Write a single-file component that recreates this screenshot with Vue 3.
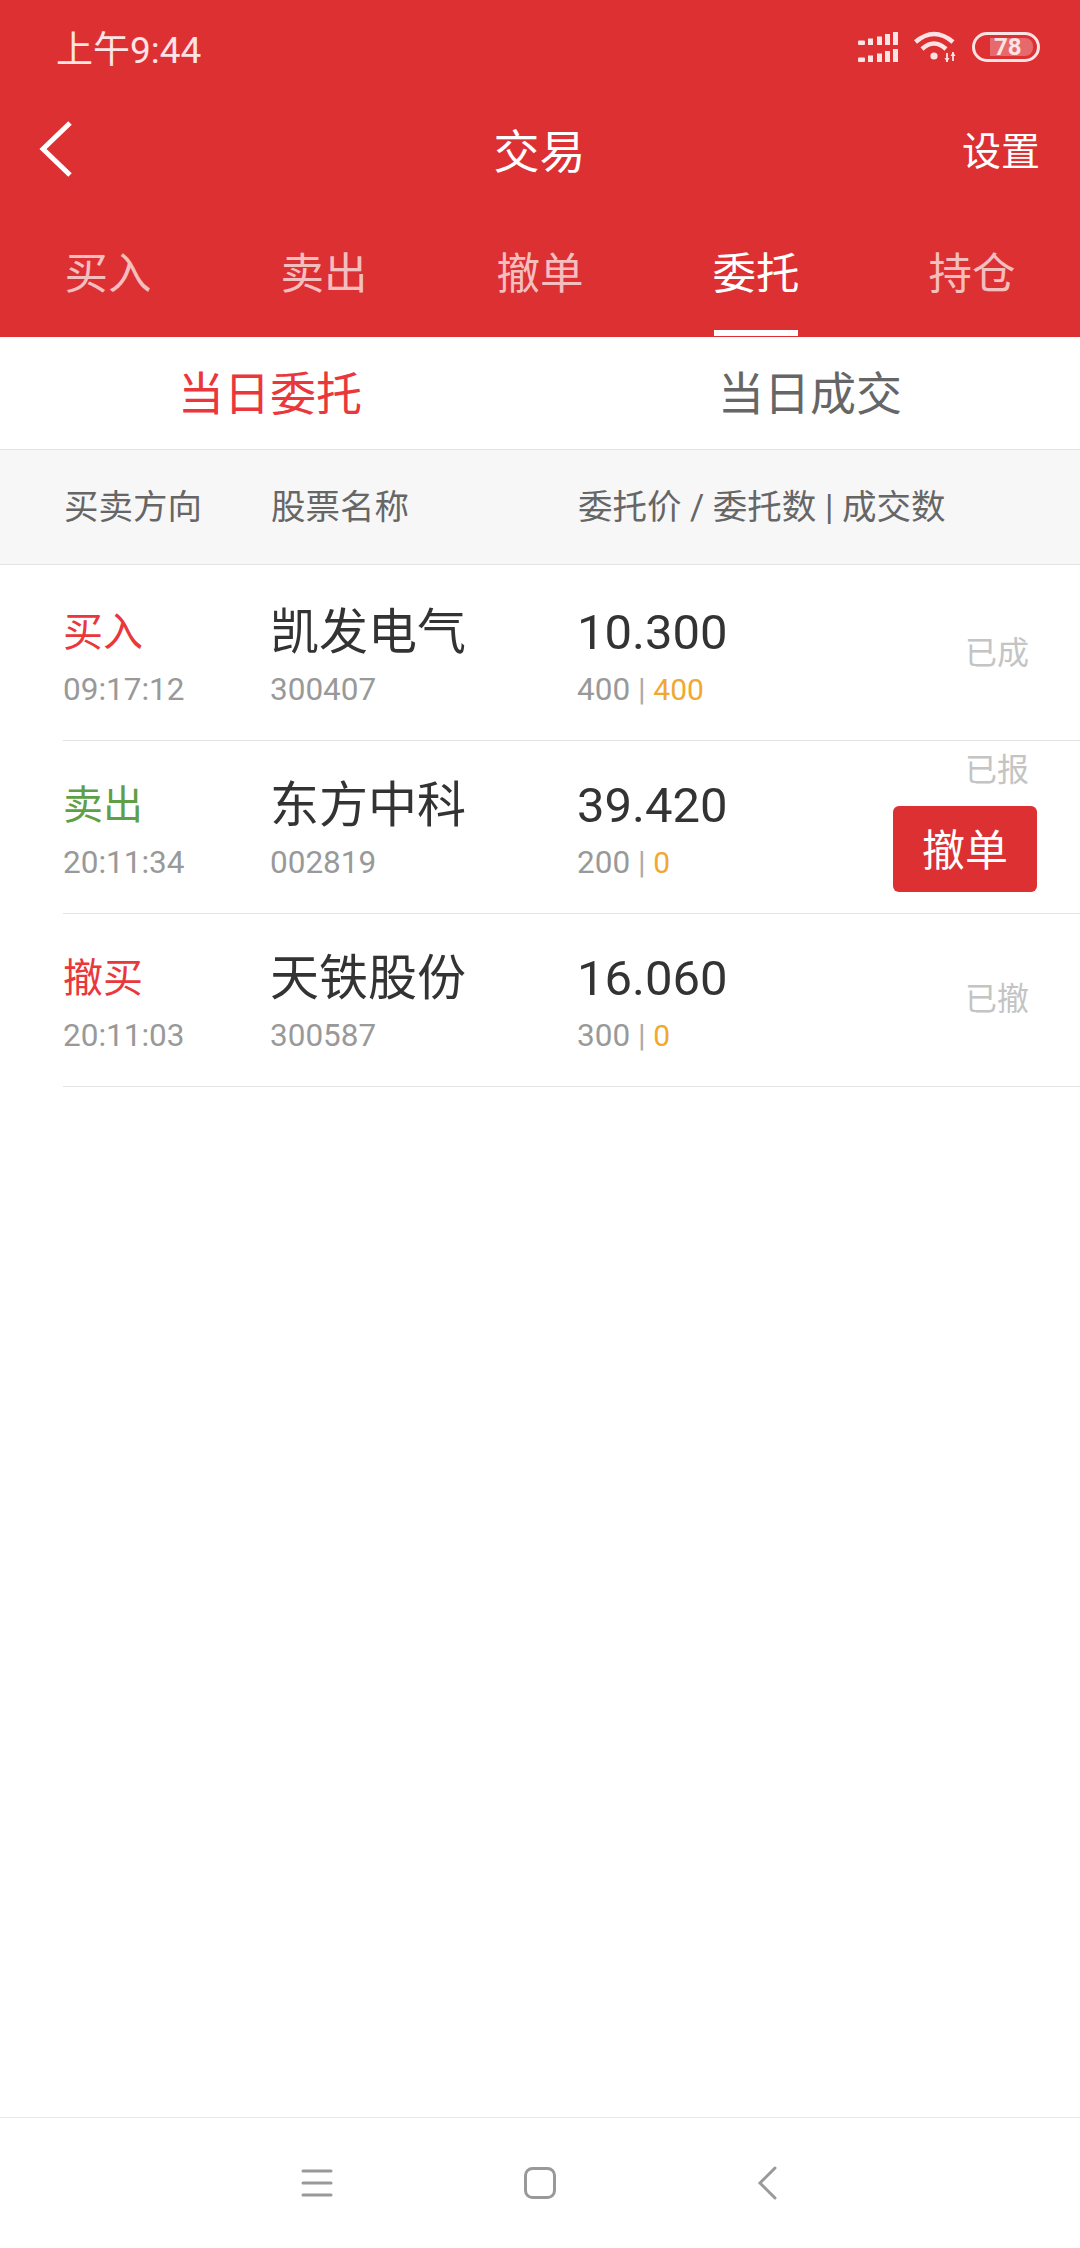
<template>
  <div class="page">
    <!-- red header -->
    <header class="top">
      <div class="status">
        <span class="clock">上午9:44</span>
        <div class="status-icons">
          <svg width="40" height="30" viewBox="0 0 40 30" fill="#fde3e3">
            <g v-for="y in [13, 30]" :key="y">
              <rect x="0" :y="y - 4.5" width="7" height="4.5" rx="1" />
              <rect x="10" :y="y - 6.5" width="5" height="6.5" />
              <rect x="19" :y="y - 8.5" width="5" height="8.5" />
              <rect x="27" :y="y - 11" width="5" height="11" />
              <rect x="35" :y="y - 13" width="5" height="13" />
            </g>
          </svg>
          <svg width="42" height="32" viewBox="0 0 42 32" fill="none" stroke="#fde3e3" stroke-width="4.500">
            <path d="M1.500 11 Q20 -5 39 11" />
            <path d="M8 18 Q20 7 32 18" />
            <circle cx="20" cy="25" r="3.600" fill="#fde3e3" stroke="none" />
            <path d="M33 22v9M39 21v9" stroke-width="1.800" />
            <path d="M30.500 27l2.500 4 2.500-4zM36.500 25l2.500-4 2.500 4z" fill="#fde3e3" stroke="none" />
          </svg>
          <div class="battery"><span class="battery-fill">78</span></div>
        </div>
      </div>

      <nav class="nav">
        <svg class="back" width="36" height="56" viewBox="0 0 36 56" fill="none" stroke="#fff" stroke-width="5">
          <path d="M31 2 L4 28 L31 54" />
        </svg>
        <h1 class="title">交易</h1>
        <span class="settings">设置</span>
      </nav>

      <div class="tabs">
        <div v-for="t in tabs" :key="t" class="tab" :class="{ active: t === '委托' }">{{ t }}</div>
      </div>
    </header>

    <div class="subtabs">
      <div class="subtab on">当日委托</div>
      <div class="subtab">当日成交</div>
    </div>

    <div class="thead">
      <span>买卖方向</span>
      <span>股票名称</span>
      <span>委托价 / 委托数 | 成交数</span>
    </div>

    <div class="list">
      <div v-for="o in orders" :key="o.code" class="row">
        <div class="col">
          <div class="dir" :class="o.cls">{{ o.dir }}</div>
          <div class="sub">{{ o.time }}</div>
        </div>
        <div class="col">
          <div class="name">{{ o.name }}</div>
          <div class="sub">{{ o.code }}</div>
        </div>
        <div class="col">
          <div class="price">{{ o.price }}</div>
          <div class="sub">{{ o.qty }} <i class="sep">|</i> <span class="done">{{ o.done }}</span></div>
        </div>
        <div class="side" :class="{ 'has-btn': o.cancel }">
          <span class="state">{{ o.state }}</span>
          <button v-if="o.cancel" class="cancel">撤单</button>
        </div>
      </div>
    </div>

    <footer class="navbar">
      <svg width="60" height="40" viewBox="0 0 60 40" fill="none" stroke="#999" stroke-width="3" stroke-linecap="round">
        <path d="M16 8H44M16 20H44M16 32H44" />
      </svg>
      <svg width="60" height="40" viewBox="0 0 60 40" fill="none" stroke="#999" stroke-width="3">
        <rect x="15.500" y="5.500" width="29" height="29" rx="7" />
      </svg>
      <svg width="60" height="40" viewBox="0 0 60 40" fill="none" stroke="#999" stroke-width="3" stroke-linecap="round">
        <path d="M42 5 L27 20 L42 35" />
      </svg>
    </footer>
  </div>
</template>

<script setup>
const tabs = ['买入', '卖出', '撤单', '委托', '持仓']

const orders = [
  { dir: '买入', cls: 'buy', time: '09:17:12', name: '凯发电气', code: '300407', price: '10.300', qty: 400, done: 400, state: '已成' },
  { dir: '卖出', cls: 'sell', time: '20:11:34', name: '东方中科', code: '002819', price: '39.420', qty: 200, done: 0, state: '已报', cancel: true },
  { dir: '撤买', cls: 'buy', time: '20:11:03', name: '天铁股份', code: '300587', price: '16.060', qty: 300, done: 0, state: '已撤' }
]
</script>

<style scoped>
.page {
  display: flex;
  flex-direction: column;
  height: 2248px;
  background: #fff;
  overflow: hidden;
  font-family: Roboto, "Noto Sans CJK SC", sans-serif;
}

.top {
  background: #dd3033;
  color: #fff;
  height: 337px;
}

.status {
  display: flex;
  justify-content: space-between;
  align-items: center;
  box-sizing: border-box;
  height: 98px;
  padding: 0 40px 5px 56px;
}
.clock {
  font-size: 37px;
  color: #fde3e3;
}
.status-icons {
  display: flex;
  align-items: center;
  gap: 16px;
}
.battery {
  box-sizing: border-box;
  width: 68px;
  height: 30px;
  border: 3px solid #fde3e3;
  border-radius: 15px;
  padding: 3px 0 0 15px;
}
.battery-fill {
  display: block;
  width: 43px;
  height: 18px;
  padding-left: 4px;
  box-sizing: border-box;
  border-radius: 0 8px 8px 0;
  background: rgba(255, 255, 255, 0.28);
  font-size: 24px;
  font-weight: 700;
  line-height: 18px;
  color: #fde3e3;
}

.nav {
  display: grid;
  grid-template-columns: 1fr auto 1fr;
  align-items: center;
  box-sizing: border-box;
  height: 106px;
  padding: 0 40px 4px 39px;
}
.back {
  display: block;
}
.title {
  margin: 0;
  padding-bottom: 2px;
  font-size: 46px;
  font-weight: 400;
}
.settings {
  justify-self: end;
  padding-bottom: 3px;
  font-size: 39px;
}

.tabs {
  display: grid;
  grid-template-columns: repeat(5, 1fr);
  height: 133px;
}
.tab {
  position: relative;
  padding-top: 9px;
  text-align: center;
  font-size: 43.500px;
  line-height: 124px;
  color: rgba(255, 255, 255, 0.7);
}
.tab.active {
  color: #fff;
}
.tab.active::after {
  content: "";
  position: absolute;
  left: 66px;
  bottom: 1px;
  width: 84px;
  height: 6px;
  background: #fff;
}

.subtabs {
  display: grid;
  grid-template-columns: 1fr 1fr;
  height: 112px;
  border-bottom: 1px solid #e3e3e3;
}
.subtab {
  text-align: center;
  font-size: 46px;
  line-height: 114px;
  color: #666;
}
.subtab.on {
  color: #e9373b;
}

.thead {
  display: grid;
  grid-template-columns: 207px 307px 1fr;
  align-items: center;
  height: 108px;
  padding: 0 0 6px 64px;
  background: #f7f7f7;
  border-bottom: 1px solid #e3e3e3;
  font-size: 34.500px;
  color: #666;
}

.list {
  flex: 1;
  padding-top: 3px;
}
.row {
  display: grid;
  grid-template-columns: 207px 307px 1fr auto;
  margin-left: 63px;
  border-bottom: 1px solid #e3e3e3;
}
.col {
  padding: 35px 0 28px;
}
.dir {
  height: 60px;
  font-size: 40px;
  line-height: 60px;
}
.buy {
  color: #e9373b;
}
.sell {
  color: #5f9f45;
}
.name {
  height: 60px;
  font-size: 49px;
  line-height: 60px;
  color: #333;
}
.price {
  height: 60px;
  font-size: 49px;
  line-height: 60px;
  color: #333;
}
.sub {
  height: 44px;
  margin-top: 5px;
  font-size: 31.500px;
  line-height: 44px;
  color: #999;
}
.sep {
  font-style: normal;
  font-size: 31px;
  color: #aaa;
}
.done {
  font-size: 30px;
  color: #f0a830;
}

.side {
  display: flex;
  flex-direction: column;
  align-items: flex-end;
  justify-content: center;
  padding: 0 43px 3px 0;
}
.side.has-btn {
  padding-bottom: 14px;
}
.state {
  padding-right: 8px;
  font-size: 32px;
  line-height: 44px;
  color: #c4c4c4;
}
.cancel {
  width: 144px;
  height: 86px;
  margin-top: 14px;
  padding: 0 0 5px;
  border: none;
  border-radius: 6px;
  background: #dd3033;
  font-family: inherit;
  font-size: 43px;
  color: #fff;
}

.navbar {
  display: flex;
  align-items: center;
  gap: 163px;
  height: 130px;
  padding-left: 287px;
  border-top: 1px solid #e8e8e8;
}
</style>
